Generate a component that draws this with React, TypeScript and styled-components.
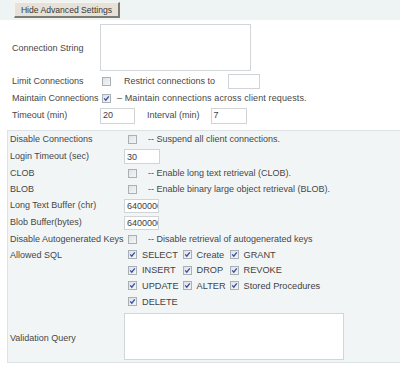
import React from "react";
import styled, { createGlobalStyle } from "styled-components";

const Global = createGlobalStyle`
  html, body { margin: 0; padding: 0; background: #ffffff; }
  body {
    font-family: "Liberation Sans", Arial, sans-serif;
    font-size: 9px;
    color: #474747;
    width: 400px;
    height: 382px;
    overflow: hidden;
  }
`;

const TopBar = styled.div`
  height: 20px;
  background: #eef3f3;
  display: flex;
  align-items: center;
  padding-left: 14px;
  box-sizing: border-box;
`;

const Button = styled.button`
  height: 16px;
  width: 106px;
  padding: 0;
  margin: 0;
  font-family: "Liberation Sans", Arial, sans-serif;
  font-size: 8.6px;
  color: #383838;
  background: #e6e2d8;
  border-style: solid;
  border-width: 1px 2px 2px 1px;
  border-color: #f6f4ee #7d7b74 #7d7b74 #f6f4ee;
  display: flex;
  align-items: center;
  justify-content: center;
`;

const Section = styled.div`
  display: flex;
  flex-direction: column;
  padding-left: 12px;
`;

const Row = styled.div<{ $h: number; $label: number; $top?: boolean }>`
  display: grid;
  grid-template-columns: ${(p) => p.$label}px auto;
  align-items: ${(p) => (p.$top ? "start" : "center")};
  height: ${(p) => p.$h}px;
`;

const Label = styled.div<{ $pt?: number }>`
  white-space: nowrap;
  line-height: 11px;
  padding-top: ${(p) => p.$pt ?? 0}px;
`;

const Cell = styled.div`
  display: flex;
  align-items: center;
  white-space: nowrap;
  line-height: 11px;
`;

const TextArea = styled.div<{ $w: number; $h: number; $mt?: number }>`
  width: ${(p) => p.$w}px;
  height: ${(p) => p.$h}px;
  margin-top: ${(p) => p.$mt ?? 0}px;
  box-sizing: border-box;
  background: #ffffff;
  border: 1px solid #d2d6d8;
`;

const Input = styled.div<{ $w: number; $h: number; $ml?: number }>`
  width: ${(p) => p.$w}px;
  height: ${(p) => p.$h}px;
  margin-left: ${(p) => p.$ml ?? 0}px;
  box-sizing: border-box;
  background: #ffffff;
  border: 1px solid #d0d4d6;
  display: flex;
  align-items: center;
  padding-left: 2px;
  overflow: hidden;
  white-space: nowrap;
  color: #3e3e3e;
`;

const Text = styled.span<{ $ml?: number; $ls?: number }>`
  margin-left: ${(p) => p.$ml ?? 0}px;
  letter-spacing: ${(p) => p.$ls ?? 0}px;
`;

const Box = styled.span<{ $ml?: number; $mr?: number }>`
  display: inline-flex;
  align-items: center;
  justify-content: center;
  width: 9px;
  height: 9px;
  box-sizing: border-box;
  margin-left: ${(p) => p.$ml ?? 0}px;
  margin-right: ${(p) => p.$mr ?? 0}px;
  border: 1px solid #a9b0b6;
  background: linear-gradient(135deg, #dfe2e5 0%, #f4f5f6 100%);
  flex: none;
`;

const Check: React.FC<{ checked?: boolean; ml?: number; mr?: number }> = ({ checked, ml, mr }) => (
  <Box $ml={ml} $mr={mr}>
    {checked && (
      <svg width="7" height="7" viewBox="0 0 7 7">
        <path d="M1.2 3.4 L2.8 5.2 L5.8 1.3" fill="none" stroke="#3a4a9e" strokeWidth="1.3" />
      </svg>
    )}
  </Box>
);

const Panel = styled.div`
  margin: 6px 0 0 7px;
  border: 1px solid #dde2e4;
  border-right: none;
  background: #f2f5f6;
  padding: 0 0 1px 2px;
  display: flex;
  flex-direction: column;
`;

const SqlGrid = styled.div`
  display: grid;
  grid-template-columns: repeat(3, auto);
  justify-content: start;
  column-gap: 4px;
  grid-auto-rows: 15.6px;
  padding-left: 4px;
`;

const SqlItem = styled.div`
  display: flex;
  align-items: center;
  white-space: nowrap;
  font-size: 9.2px;
  color: #434343;
`;

const sql: [string, boolean][] = [
  ["SELECT", true],
  ["Create", true],
  ["GRANT", true],
  ["INSERT", true],
  ["DROP", true],
  ["REVOKE", true],
  ["UPDATE", true],
  ["ALTER", true],
  ["Stored Procedures", true],
  ["DELETE", true],
];

export default function App() {
  return (
    <>
      <Global />
      <TopBar>
        <Button>Hide Advanced Settings</Button>
      </TopBar>
      <Section>
        <Row $h={53} $label={88}>
          <Label $pt={3}>Connection String</Label>
          <TextArea $w={151} $h={47} $mt={1} />
        </Row>
        <Row $h={17} $label={88}>
          <Label>Limit Connections</Label>
          <Cell>
            <Check ml={2} />
            <Text $ml={13}>Restrict connections to</Text>
            <Input $w={32} $h={15} $ml={13} />
          </Cell>
        </Row>
        <Row $h={17} $label={88}>
          <Label>Maintain Connections</Label>
          <Cell>
            <Check checked ml={2} />
            <Text $ml={6} $ls={0.12}>– Maintain connections across client requests.</Text>
          </Cell>
        </Row>
        <Row $h={17} $label={88}>
          <Label>Timeout (min)</Label>
          <Cell>
            <Input $w={35} $h={16}>20</Input>
            <Text $ml={12}>Interval (min)</Text>
            <Input $w={36} $h={16} $ml={11}>7</Input>
          </Cell>
        </Row>
      </Section>
      <Panel>
        <Row $h={17} $label={114}>
          <Label>Disable Connections</Label>
          <Cell>
            <Check ml={4} />
            <Text $ml={11}>-- Suspend all client connections.</Text>
          </Cell>
        </Row>
        <Row $h={17} $label={114}>
          <Label>Login Timeout (sec)</Label>
          <Input $w={36} $h={15}>30</Input>
        </Row>
        <Row $h={16} $label={114}>
          <Label>CLOB</Label>
          <Cell>
            <Check ml={4} />
            <Text $ml={11}>-- Enable long text retrieval (CLOB).</Text>
          </Cell>
        </Row>
        <Row $h={16} $label={114}>
          <Label>BLOB</Label>
          <Cell>
            <Check ml={4} />
            <Text $ml={11}>-- Enable binary large object retrieval (BLOB).</Text>
          </Cell>
        </Row>
        <Row $h={17} $label={114}>
          <Label>Long Text Buffer (chr)</Label>
          <Input $w={35} $h={14}>6400000</Input>
        </Row>
        <Row $h={17} $label={114}>
          <Label>Blob Buffer(bytes)</Label>
          <Input $w={35} $h={14}>6400000</Input>
        </Row>
        <Row $h={16} $label={114}>
          <Label>Disable Autogenerated Keys</Label>
          <Cell>
            <Check ml={4} />
            <Text $ml={11}>-- Disable retrieval of autogenerated keys</Text>
          </Cell>
        </Row>
        <Row $h={64} $label={114} $top>
          <Label $pt={3}>Allowed SQL</Label>
          <SqlGrid>
            {sql.map(([name, on]) => (
              <SqlItem key={name}>
                <Check checked={on} mr={5} />
                {name}
              </SqlItem>
            ))}
          </SqlGrid>
        </Row>
        <Row $h={50} $label={114}>
          <Label $pt={5}>Validation Query</Label>
          <TextArea $w={220} $h={47} />
        </Row>
      </Panel>
    </>
  );
}
